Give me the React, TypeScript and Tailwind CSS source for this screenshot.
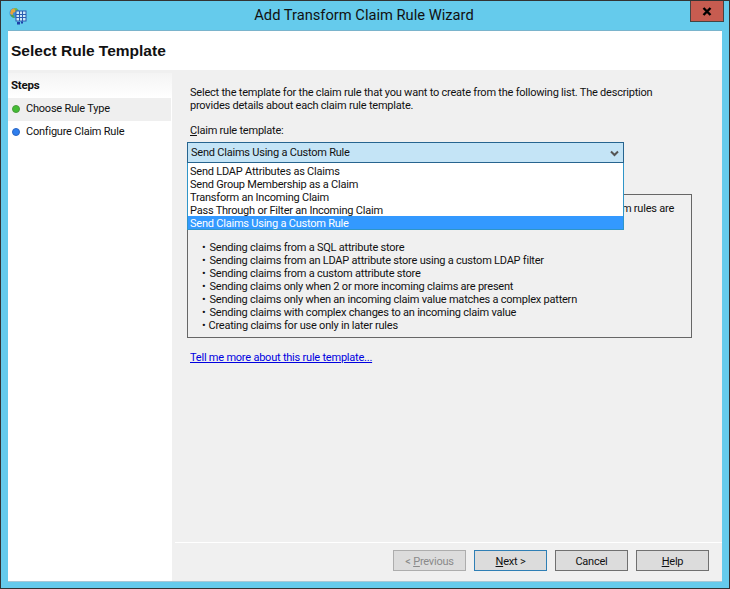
const templates = [
  'Send LDAP Attributes as Claims',
  'Send Group Membership as a Claim',
  'Transform an Incoming Claim',
  'Pass Through or Filter an Incoming Claim',
]

const capabilities = [
  'Sending claims from a SQL attribute store',
  'Sending claims from an LDAP attribute store using a custom LDAP filter',
  'Sending claims from a custom attribute store',
  'Sending claims only when 2 or more incoming claims are present',
  'Sending claims only when an incoming claim value matches a complex pattern',
  'Sending claims with complex changes to an incoming claim value',
]

function WizardIcon() {
  return (
    <svg width="18" height="18" viewBox="0 0 18 18">
      <circle cx="5.5" cy="6" r="5" fill="#3f8fd0" />
      <path d="M2 3c1.500-2 5-2.500 6-1l-1.500 3-2 .5-1 2.500-2.500-1z" fill="#e8a33a" />
      <path d="M5 1.500c1.500-.5 3 0 4 1l-2 2z" fill="#6cbb4a" />
      <path d="M1.500 8c1 2 2.500 3 4 3l-1-3z" fill="#4fa84a" />
      <rect x="7" y="4" width="10" height="10" fill="#cfe9f7" stroke="#2a5db0" />
      <path d="M7 7.500h10M7 10.500h10M10.500 4v10M13.500 4v10" stroke="#2a5db0" />
      <rect x="8" y="15" width="3" height="2.500" fill="#1d3fa8" />
      <rect x="12" y="14.500" width="2" height="2" fill="#1d3fa8" />
    </svg>
  )
}

function WizardButton({ children, className }: { children: React.ReactNode; className: string }) {
  return (
    <button className={`flex h-[21px] w-[73px] items-center justify-center border bg-[#dcdcdc] pt-[1px] leading-none ${className}`}>
      {children}
    </button>
  )
}

export default function App() {
  return (
    <div className="flex h-[589px] w-[730px] flex-col border border-[#333] bg-[#65cbec] font-['Roboto',sans-serif] text-[11px] tracking-[-0.22px] text-[#111]">
      {/* Title bar */}
      <div className="flex h-[29px] shrink-0 items-start">
        <div className="mt-[6px] ml-[8px]">
          <WizardIcon />
        </div>
        <div className="flex-1 pt-[4px] pl-[11px] text-center text-[14.7px] leading-5 tracking-normal">Add Transform Claim Rule Wizard</div>
        <div className="mr-[5px] flex h-[21px] w-[34px] items-center justify-center border-x border-b border-[#444] bg-[#c75c50]">
          <svg width="10" height="9" viewBox="0 0 10 9">
            <path d="M1.500 1l7 7M8.500 1l-7 7" stroke="#000" strokeWidth="2.400" fill="none" />
          </svg>
        </div>
      </div>

      <div className="mx-[7px] flex flex-1 flex-col border-y border-t-[#7ab4cc] border-b-[#a8c8d6] bg-[#f0f0f0]">
        {/* Header */}
        <div className="flex h-[39px] shrink-0 items-center bg-white pl-[3px] font-['Liberation_Sans',sans-serif] text-[15.5px] font-bold tracking-normal">
          Select Rule Template
        </div>

        <div className="mt-[3px] flex flex-1">
          {/* Steps */}
          <aside className="w-[164px] shrink-0 bg-white">
            <div className="flex h-[25px] items-center bg-gradient-to-b from-[#f4f4f4] to-white pl-[3px] text-[11.5px] font-bold">Steps</div>
            <div className="flex h-[23px] w-[163px] items-center gap-[6px] bg-[#efefef] pb-[1px] pl-[4px]">
              <span className="h-2 w-2 rounded-full border border-[#4a9a3c] bg-[#43bd33]" />
              Choose Rule Type
            </div>
            <div className="flex h-[23px] items-center gap-[6px] pb-[1px] pl-[4px]">
              <span className="h-2 w-2 rounded-full border border-[#2a66c4] bg-[#2f7fee]" />
              Configure Claim Rule
            </div>
          </aside>

          {/* Main panel */}
          <main className="ml-[3px] flex min-w-0 flex-1 flex-col">
            <div className="flex-1 pt-[13px] pl-[15px]">
              <p className="leading-[13px] whitespace-nowrap">
                Select the template for the claim rule that you want to create from the following list. The description
                <br />
                provides details about each claim rule template.
              </p>
              <p className="mt-[12px] leading-[13px]">
                <u>C</u>laim rule template:
              </p>

              <div className="relative mt-[5px] ml-[-3px] w-[437px]">
                <div className="flex h-[21px] items-center justify-between border border-[#26648f] bg-[#c4e4f6] pt-[2px] pr-[4px] pl-[3px]">
                  Send Claims Using a Custom Rule
                  <svg width="9" height="7" viewBox="0 0 9 7">
                    <path d="M1 1.500l3.500 3.500 3.500-3.500" stroke="#555" strokeWidth="2" fill="none" />
                  </svg>
                </div>
                <ul className="absolute top-[21px] left-0 z-10 w-full border-x border-b border-[#2f95c8] bg-white pt-[1px] leading-[13px]">
                  {templates.map((t) => (
                    <li key={t} className="h-[13px] pt-[1px] pl-[2px]">
                      {t}
                    </li>
                  ))}
                  <li className="h-[13px] bg-[#3399ff] pt-[1px] pl-[2px] text-white">Send Claims Using a Custom Rule</li>
                </ul>
              </div>

              {/* The dropdown covers the start of this box, only the end of the first line shows */}
              <div className="mt-[31px] ml-[-3px] h-[144px] w-[505px] border border-[#666] pt-[7px] pl-[2px] leading-[13px]">
                <p className="h-[26px] pr-[17px] text-right">m rules are</p>
                <ul className="mt-[13px] pl-[12px]">
                  {capabilities.map((c) => (
                    <li key={c} className="flex gap-[4px]">
                      <span>•</span>
                      {c}
                    </li>
                  ))}
                  <li className="flex gap-[3px]">
                    <span>•</span>
                    Creating claims for use only in later rules
                  </li>
                </ul>
              </div>

              <a className="mt-[13px] block leading-[13px] text-[#0000e0] underline">Tell me more about this rule template...</a>
            </div>

            {/* Footer */}
            <div className="flex h-[39px] shrink-0 items-start justify-end gap-[8px] border-t border-white pt-[7px] pr-[13px]">
              <WizardButton className="border-[#adadad] text-[#8a8a8a]">
                &lt;&nbsp;<u>P</u>revious
              </WizardButton>
              <WizardButton className="border-[#2f7fb5]">
                <u>N</u>ext &gt;
              </WizardButton>
              <WizardButton className="border-[#707070]">Cancel</WizardButton>
              <WizardButton className="border-[#707070]">
                <u>H</u>elp
              </WizardButton>
            </div>
          </main>
        </div>
      </div>
      <div className="h-[6px] shrink-0" />
    </div>
  )
}
